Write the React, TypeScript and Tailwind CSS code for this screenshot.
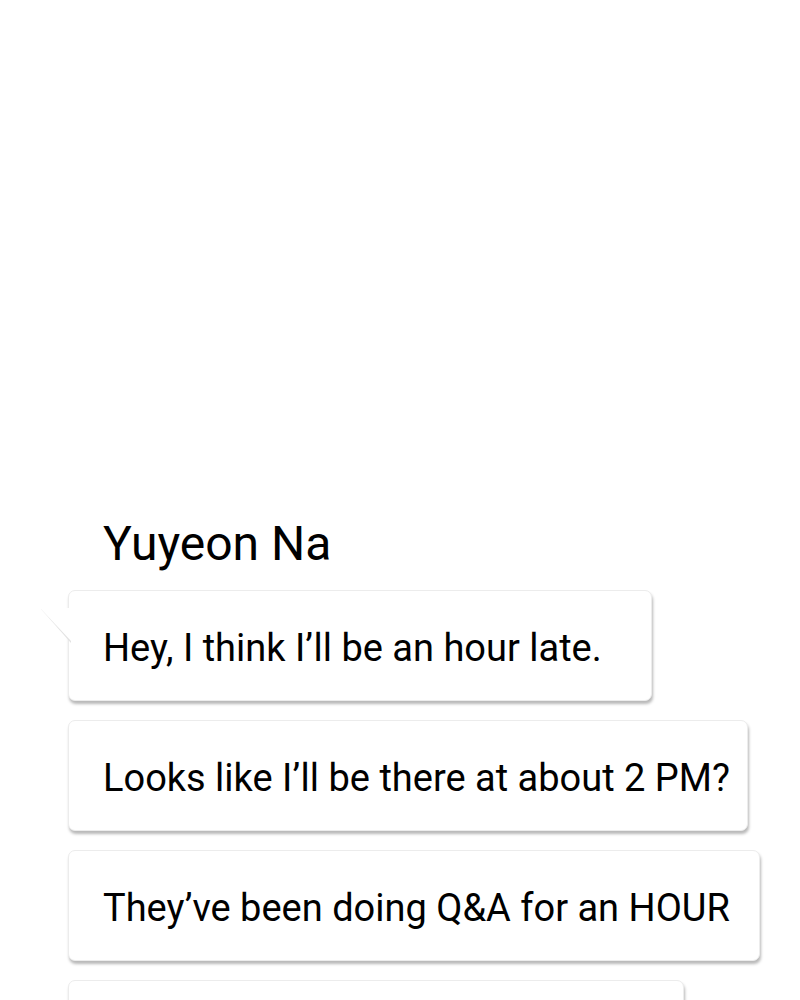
const messages = [
  { text: "Hey, I think I’ll be an hour late.", w: "w-[584px]", tail: true },
  { text: "Looks like I’ll be there at about 2 PM?", w: "w-[680px]" },
  { text: "They’ve been doing Q&A for an HOUR", w: "w-[692px]" },
  { text: "", w: "w-[616px]" },
];

function Bubble({ text, w, tail }: { text: string; w: string; tail?: boolean }) {
  return (
    <div className="relative self-start">
      {tail && (
        <svg className="absolute -left-[28px] top-[18px]" width="31" height="36" viewBox="0 0 31 36">
          <polygon points="31,1 1,1 31,35" fill="#e2e2e2" />
          <polygon points="31,0 0,0 31,33" fill="#ffffff" />
        </svg>
      )}
      <div className={`${w} h-[111px] flex items-center pl-[34px] pt-[6px] bg-white rounded-[7px] border border-[#ececec] shadow-[1px_3px_3px_rgba(0,0,0,0.28)]`}>
        <span className="text-[38px] text-black whitespace-nowrap">{text}</span>
      </div>
    </div>
  );
}

export default function App() {
  return (
    <div className="w-[800px] h-[1000px] overflow-hidden bg-white" style={{ fontFamily: "Roboto, 'Noto Sans', sans-serif" }}>
      <div className="pt-[512px] pl-[68px] flex flex-col">
        <h1 className="pl-[35px] text-[48px] leading-[64px] text-black">Yuyeon Na</h1>
        <div className="mt-[14px] flex flex-col gap-[19px]">
          {messages.map((m, i) => (
            <Bubble key={i} text={m.text} w={m.w} tail={m.tail} />
          ))}
        </div>
      </div>
    </div>
  );
}
